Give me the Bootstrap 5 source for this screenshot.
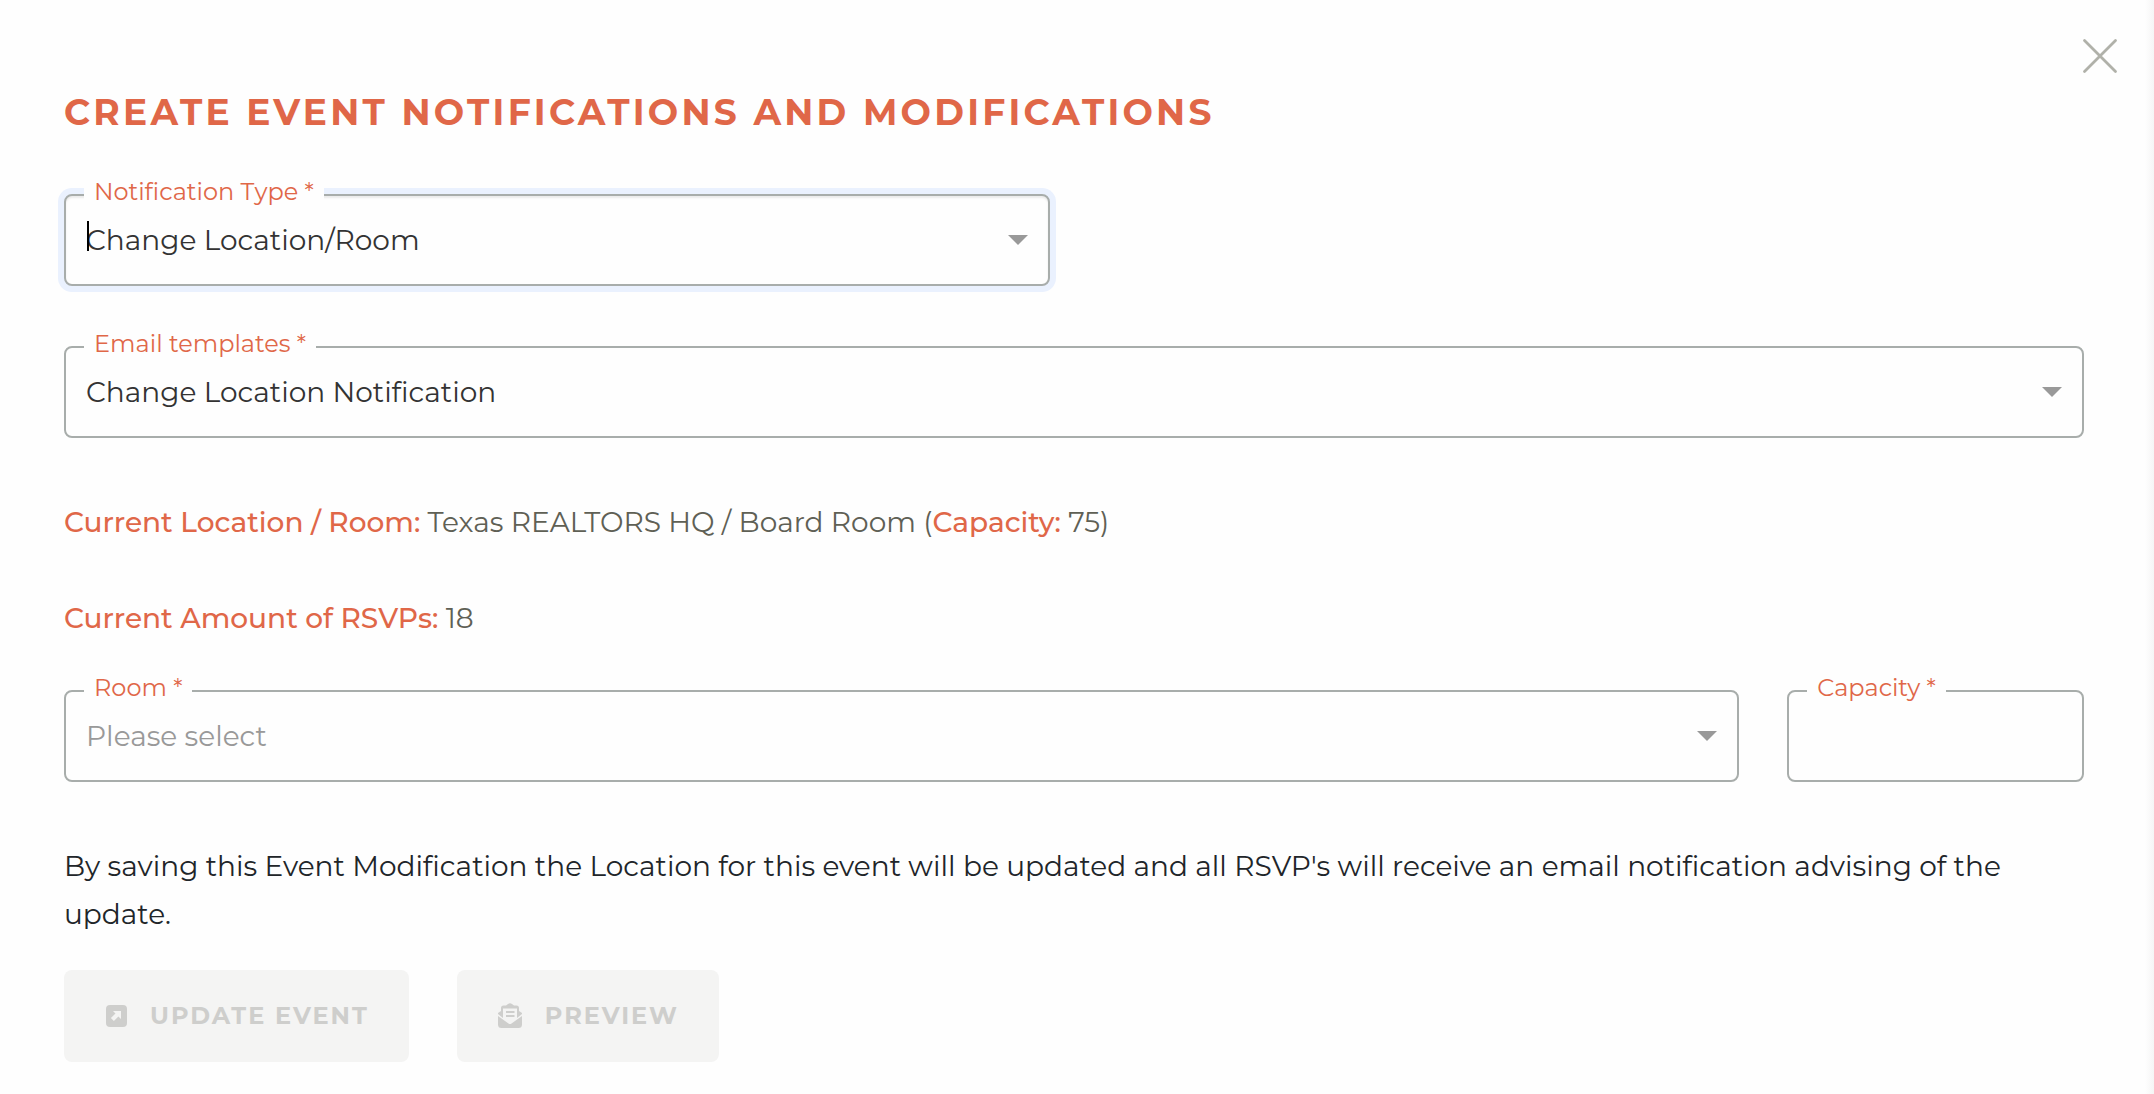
<!DOCTYPE html>
<html lang="en">
<head>
<meta charset="utf-8">
<meta name="viewport" content="width=device-width, initial-scale=1">
<title>Create Event Notifications and Modifications</title>
<link href="https://cdn.jsdelivr.net/npm/bootstrap@5.3.0/dist/css/bootstrap.min.css" rel="stylesheet">
<style>
  :root { --accent: #e06748; --line: #a8adab; --panel: #fefefe; }
  body { background: var(--panel); font-family: Montserrat, Inter, sans-serif; font-size: 28px; line-height: 48px; color: #212529; }
  .event-panel { min-height: 100vh; padding: 88px 70px 30px 64px; background: linear-gradient(to left, #f5f5f5, var(--panel) 9px) var(--panel); }
  .panel-title { font-size: 36px; line-height: 48px; font-weight: 700; letter-spacing: .09em; color: var(--accent); margin-bottom: 58px; }
  .panel-row { --bs-gutter-x: 48px; }
  .gap-below { margin-bottom: 60px; }
  .outlined label { position: absolute; top: -20px; left: 20px; padding: 0 10px; font-size: 24px; line-height: 36px; color: var(--accent); background: var(--panel); }
  .outlined .form-select, .outlined .form-control { height: 92px; border: 2px solid var(--line); border-radius: 8px; padding: 0 60px 0 20px; font-size: 28px; line-height: 48px; color: #333; background-color: var(--panel); }
  .outlined .form-select { background-image: url("data:image/svg+xml,%3csvg xmlns='http://www.w3.org/2000/svg' viewBox='0 0 20 10'%3e%3cpath fill='%23999' d='M0 0h20L10 10z'/%3e%3c/svg%3e"); background-size: 20px 10px; background-position: right 20px center; }
  .outlined .form-select.unset { color: #999; }
  .outlined .form-select.active-field { box-shadow: 0 0 0 6px #eaf1fe, inset 0 2px 2px rgba(0,0,0,.08); }
  .text-cursor { position: absolute; left: 23px; top: 27px; width: 2px; height: 30px; background: #000; }
  .detail-line { color: #5f6055; margin-bottom: 48px; }
  .detail-line strong { font-weight: 500; color: var(--accent); }
  .close-panel { position: absolute; top: 38px; right: 36px; line-height: 0; border: 0; background: none; padding: 0; }
  .panel-actions { gap: 48px; }
  .panel-actions .btn { height: 92px; padding: 0 40px; border: 0; border-radius: 8px; font-size: 24px; line-height: 36px; font-weight: 700; letter-spacing: 2px; color: #cececc; background: #f4f4f3; opacity: 1; gap: 22px; }
</style>
</head>
<body>
<main class="event-panel position-relative">
  <button type="button" class="close-panel" aria-label="Close">
    <svg width="36" height="36" viewBox="0 0 36 36" fill="none" stroke="#b0b1a9" stroke-width="2.8" stroke-linecap="round"><path d="M2.5 2.5l31 31M33.5 2.5l-31 31"/></svg>
  </button>
  <h1 class="panel-title text-uppercase">Create Event Notifications and Modifications</h1>
  <form>
    <div class="row panel-row gap-below">
      <div class="col-6">
        <div class="outlined position-relative">
          <select id="type" class="form-select active-field"><option>Change Location/Room</option></select>
          <label for="type">Notification Type *</label>
          <span class="text-cursor"></span>
        </div>
      </div>
    </div>
    <div class="outlined position-relative gap-below">
      <select id="template" class="form-select"><option>Change Location Notification</option></select>
      <label for="template">Email templates *</label>
    </div>
    <p class="detail-line"><strong>Current Location / Room:</strong> Texas REALTORS HQ / Board Room (<strong>Capacity:</strong> 75)</p>
    <p class="detail-line"><strong>Current Amount of RSVPs:</strong> 18</p>
    <div class="row panel-row gap-below">
      <div class="col-10">
        <div class="outlined position-relative">
          <select id="room" class="form-select unset"><option>Please select</option></select>
          <label for="room">Room *</label>
        </div>
      </div>
      <div class="col-2">
        <div class="outlined position-relative">
          <input id="capacity" type="text" class="form-control">
          <label for="capacity">Capacity *</label>
        </div>
      </div>
    </div>
    <p class="mb-0">By saving this Event Modification the Location for this event will be updated and all RSVP's will receive an email notification advising of the update.</p>
    <div class="panel-actions d-flex mt-4 pt-2">
      <button type="button" class="btn d-flex align-items-center text-uppercase" disabled>
        <svg width="24" height="24" viewBox="0 0 24 24"><rect x="2" y="1" width="21" height="22" rx="4" fill="#cececc"/><path d="M9 7h8v8l-2.600-2.600-4.500 4.600-3-3 4.600-4.500z" fill="#f4f4f3"/></svg>
        Update Event
      </button>
      <button type="button" class="btn d-flex align-items-center text-uppercase" disabled>
        <svg width="26" height="26" viewBox="0 0 26 26" fill="#cececc"><path d="M1 10l3-2V5q0-2.500 2.500-2.500H9L11 1q2-1.500 4 0l2 1.500h2.500Q22 2.500 22 5v3l3 2v1l-5 4V5.500H6V15l-5-4z"/><path d="M9 8h8.500v2H9zM9 12h8.500v2H9z"/><path d="M1 13l10.500 7.500q1.500 1 3 0L25 13v8.500q0 3.500-3.500 3.500h-17Q1 25 1 21.500z"/></svg>
        Preview
      </button>
    </div>
  </form>
</main>
<script src="https://cdn.jsdelivr.net/npm/bootstrap@5.3.0/dist/js/bootstrap.bundle.min.js"></script>
</body>
</html>
